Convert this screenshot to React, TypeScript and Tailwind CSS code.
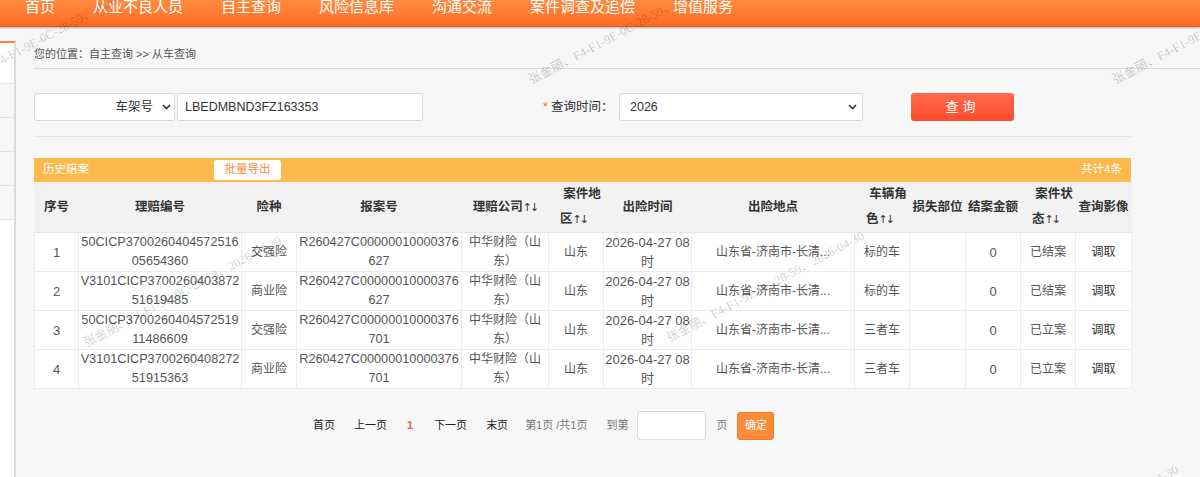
// 从车查询页面（自主查询 >> 从车查询）
// 顶部导航 + 左侧折叠菜单 + 查询条件 + 历史赔案列表 + 分页

const navItems = ['首页', '从业不良人员', '自主查询', '风险信息库', '沟通交流', '案件调查及追偿', '增值服务'];

interface ClaimRow {
  id: number;
  claimNo: string;
  kind: string;
  reportNo: string;
  company: string;
  area: string;
  time: string;
  place: string;
  role: string;
  part: string;
  amount: string;
  status: string;
}

const rows: ClaimRow[] = [
  { id: 1, claimNo: '50CICP370026040457251605654360', kind: '交强险', reportNo: 'R260427C00000010000376627', company: '中华财险（山东）', area: '山东', time: '2026-04-27 08时', place: '山东省-济南市-长清...', role: '标的车', part: '', amount: '0', status: '已结案' },
  { id: 2, claimNo: 'V3101CICP370026040387251619485', kind: '商业险', reportNo: 'R260427C00000010000376627', company: '中华财险（山东）', area: '山东', time: '2026-04-27 08时', place: '山东省-济南市-长清...', role: '标的车', part: '', amount: '0', status: '已结案' },
  { id: 3, claimNo: '50CICP370026040457251911486609', kind: '交强险', reportNo: 'R260427C00000010000376701', company: '中华财险（山东）', area: '山东', time: '2026-04-27 08时', place: '山东省-济南市-长清...', role: '三者车', part: '', amount: '0', status: '已立案' },
  { id: 4, claimNo: 'V3101CICP370026040827251915363', kind: '商业险', reportNo: 'R260427C00000010000376701', company: '中华财险（山东）', area: '山东', time: '2026-04-27 08时', place: '山东省-济南市-长清...', role: '三者车', part: '', amount: '0', status: '已立案' },
];

// 列宽（合计 1097px）
const cols = ['w-[44px]', 'w-[163px]', 'w-[55px]', 'w-[165px]', 'w-[87px]', 'w-[55px]', 'w-[88px]', 'w-[163px]', 'w-[55px]', 'w-[56px]', 'w-[55px]', 'w-[55px]', 'w-[56px]'];

const WATERMARK = '张金丽、F4-F1-9E-0C-28-59、2026-04-30';

// 水印位置（文字左下角）
const marks = [
  'left-[-47px] top-[80px]',
  'left-[533px] top-[73px]',
  'left-[1117px] top-[73px]',
  'left-[88px] top-[336px]',
  'left-[671px] top-[331px]',
  'left-[222px] top-[590px]',
  'left-[985px] top-[565px]',
];

function Chevron() {
  return (
    <svg width="9" height="6" viewBox="0 0 9 6" className="shrink-0">
      <path d="M1 1 L4.5 4.5 L8 1" fill="none" stroke="#333" strokeWidth="1.6" />
    </svg>
  );
}

// 排序箭头
function Arrows() {
  return <span className="font-['DejaVu_Sans',sans-serif] font-normal text-[11px] tracking-[-2px]">↑↓</span>;
}

function SortHead({ a, b }: { a: string; b: string }) {
  return (
    <div className="leading-[25px]">
      <div className="pl-[12px] whitespace-nowrap">{a}</div>
      <div className="pr-[5px] whitespace-nowrap">{b}<Arrows /></div>
    </div>
  );
}

export default function App() {
  const th = 'h-[50px] p-0 text-center align-middle font-bold text-[12.5px] text-[#333] border-b border-[#e6e6e6]';
  const td = 'h-[38px] p-0 px-[1px] text-center align-middle border border-[#ececec] leading-[19px]';

  return (
    <div className="relative w-full h-[477px] overflow-hidden bg-[#f7f7f7] font-['Liberation_Sans','Noto_Sans_CJK_SC',sans-serif]">
      {/* 顶部导航 */}
      <nav className="relative z-10 h-[27px] overflow-hidden bg-gradient-to-b from-[#ff8b40] to-[#ff6a22] border-b border-[#e8560f] shadow-[0_1px_2px_rgba(0,0,0,0.3)]">
        <ul className="flex gap-[38px] pl-[25px] -mt-[2px]">
          {navItems.map((n) => (
            <li key={n} className="text-white text-[15px] leading-[18px] whitespace-nowrap">{n}</li>
          ))}
        </ul>
      </nav>

      <div className="flex h-[450px]">
        {/* 左侧菜单（折叠） */}
        <aside className="w-[16px] shrink-0 pt-[14px]">
          <div className="h-full bg-white border-t-2 border-t-[#ff7f3a] border-r-2 border-r-[#dcdcdc]">
            <div className="h-[40px]" />
            {[0, 1, 2, 3].map((i) => (
              <div key={i} className="h-[34px] border-t border-[#e4e4e4] bg-[#f7f7f7]" />
            ))}
            <div className="border-t border-[#e4e4e4]" />
          </div>
        </aside>

        <main className="flex-1 pl-[18px]">
          {/* 面包屑 */}
          <div className="pt-[19px] pb-[6px] border-b border-[#dcdcdc] text-[11px] leading-[16px] text-[#555]">
            您的位置：自主查询 &gt;&gt; 从车查询
          </div>

          {/* 查询条件 */}
          <div className="mt-[24px] w-[1097px] pb-[15px] border-b border-[#e6e6e6] flex items-center">
            <div className="w-[141px] h-[28px] bg-white border border-[#d9d9d9] rounded-[3px] flex items-center justify-end pr-[3px] text-[12.5px] text-[#333]">
              <span>车架号</span>
              <span className="ml-[9px]"><Chevron /></span>
            </div>
            <div className="ml-[2px] w-[246px] h-[28px] bg-white border border-[#d9d9d9] rounded-[3px] flex items-center pl-[7px] text-[12.5px] text-[#333]">
              LBEDMBND3FZ163353
            </div>
            <div className="ml-[120px] w-[76px] text-[12.5px] text-[#333] whitespace-nowrap">
              <span className="text-[#ff6a1a] mr-[3px]">*</span>查询时间：
            </div>
            <div className="w-[244px] h-[28px] bg-white border border-[#d9d9d9] rounded-[3px] flex items-center justify-between pl-[10px] pr-[5px] text-[12.5px] text-[#333]">
              <span>2026</span>
              <Chevron />
            </div>
            <button className="ml-[48px] w-[103px] h-[28px] rounded-[3px] bg-gradient-to-b from-[#ff6a4c] to-[#ff4a2c] text-white text-[13px] tracking-[4px]">
              查询
            </button>
          </div>

          {/* 历史赔案 */}
          <div className="mt-[21px] w-[1097px]">
            <div className="h-[24px] bg-[#fdb94b] flex items-center px-[9px] text-[11.5px] text-white">
              <span>历史赔案</span>
              <button className="ml-[125px] w-[67px] h-[20px] bg-white rounded-[2px] text-[#f98a45] text-[11.5px]">批量导出</button>
              <span className="ml-auto">共计4条</span>
            </div>

            <table className="w-[1097px] table-fixed border-collapse">
              <colgroup>
                {cols.map((c, i) => <col key={i} className={c} />)}
              </colgroup>
              <thead className="bg-[#f2f2f2]">
                <tr>
                  <th className={th}>序号</th>
                  <th className={th}>理赔编号</th>
                  <th className={th}>险种</th>
                  <th className={th}>报案号</th>
                  <th className={th}>理赔公司<Arrows /></th>
                  <th className={th}><SortHead a="案件地" b="区" /></th>
                  <th className={th}>出险时间</th>
                  <th className={th}>出险地点</th>
                  <th className={th}><SortHead a="车辆角" b="色" /></th>
                  <th className={th}>损失部位</th>
                  <th className={th}>结案金额</th>
                  <th className={th}><SortHead a="案件状" b="态" /></th>
                  <th className={th}>查询影像</th>
                </tr>
              </thead>
              <tbody className="bg-white text-[#555] text-[12px]">
                {rows.map((r) => (
                  <tr key={r.id}>
                    <td className={`${td} text-[13px]`}>{r.id}</td>
                    <td className={`${td} text-[12.7px] break-all`}>{r.claimNo}</td>
                    <td className={td}>{r.kind}</td>
                    <td className={`${td} text-[12.7px] break-all`}>{r.reportNo}</td>
                    <td className={`${td} px-[6px]`}>{r.company}</td>
                    <td className={td}>{r.area}</td>
                    <td className={`${td} text-[13px]`}>{r.time}</td>
                    <td className={`${td} whitespace-nowrap`}>{r.place}</td>
                    <td className={td}>{r.role}</td>
                    <td className={td}>{r.part}</td>
                    <td className={`${td} text-[13px]`}>{r.amount}</td>
                    <td className={td}>{r.status}</td>
                    <td className={`${td} text-[#333]`}>调取</td>
                  </tr>
                ))}
              </tbody>
            </table>
          </div>

          {/* 分页 */}
          <div className="mt-[22px] h-[29px] flex items-center pl-[279px] text-[11px] text-[#777] whitespace-nowrap">
            <span className="text-[#222]">首页</span>
            <span className="ml-[19px] text-[#222]">上一页</span>
            <span className="ml-[20px] text-[#f05a4a] font-bold">1</span>
            <span className="ml-[21px] text-[#222]">下一页</span>
            <span className="ml-[19px] text-[#222]">末页</span>
            <span className="ml-[17px]">第1页 /共1页</span>
            <span className="ml-[19px]">到第</span>
            <div className="ml-[9px] w-[69px] h-[29px] bg-white border border-[#dcdcdc] rounded-[3px]" />
            <span className="ml-[10px]">页</span>
            <button className="ml-[10px] w-[37px] h-[28px] rounded-[3px] bg-[#ff8a3a] border border-[#f07a2a] text-white text-[11px]">确定</button>
          </div>
        </main>
      </div>

      {/* 水印 */}
      {marks.map((m) => (
        <span
          key={m}
          className={`pointer-events-none absolute z-20 ${m} origin-bottom-left -rotate-[28deg] whitespace-nowrap text-[12.5px] leading-[14px] text-[rgba(0,0,0,0.2)] font-['Liberation_Serif','Noto_Sans_CJK_SC',serif]`}
        >
          {WATERMARK}
        </span>
      ))}
    </div>
  );
}
